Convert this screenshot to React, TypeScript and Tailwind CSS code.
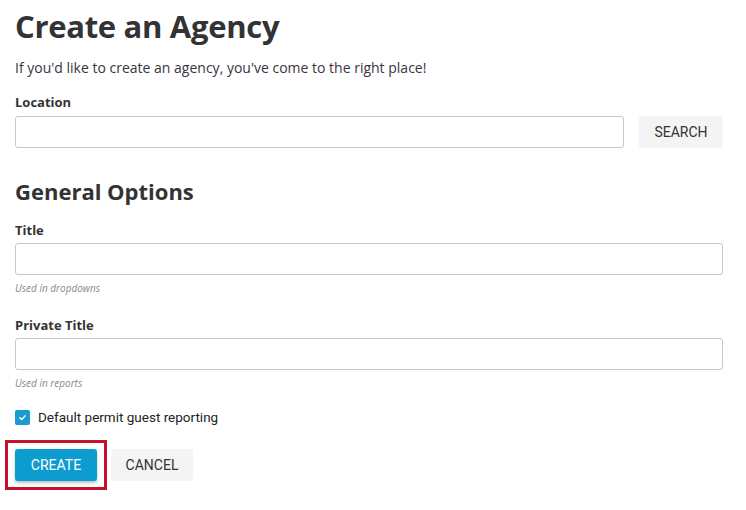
import React from "react";

function Field({ label, hint }: { label: string; hint?: string }) {
  return (
    <div className="flex flex-col">
      <label className="text-[13px] font-bold text-[#333] leading-[18px] mb-[4px]">{label}</label>
      <input className="h-[32px] w-full rounded-[3px] border border-[#c6c4cc] bg-white px-2 outline-none" />
      {hint && (
        <span className="mt-[6px] text-[10px] italic text-[#8a8a8a] leading-[14px]">{hint}</span>
      )}
    </div>
  );
}

export default function App() {
  return (
    <div
      className="w-[746px] h-[510px] bg-white pl-[15px] pr-[23px] pt-[4px] text-[#333]"
      style={{ fontFamily: '"Open Sans", "Noto Sans", sans-serif' }}
    >
      <h1 className="text-[31px] font-bold leading-[44px] text-[#333] tracking-[-0.3px]">Create an Agency</h1>
      <p className="mt-[11px] text-[14px] leading-[18px] text-[#3a3342]">
        If you'd like to create an agency, you've come to the right place!
      </p>
      <div className="mt-[16px]">
        <label className="block text-[13px] font-bold leading-[18px] mb-[5px]">Location</label>
        <div className="flex items-center gap-[15px]">
          <input className="h-[32px] flex-1 rounded-[3px] border border-[#c6c4cc] bg-white px-2 outline-none" />
          <button
            className="h-[32px] w-[84px] rounded-[3px] bg-[#f4f4f4] text-[14px] text-[#333]"
            style={{ fontFamily: 'Roboto, "Liberation Sans", sans-serif' }}
          >
            SEARCH
          </button>
        </div>
      </div>
      <h2 className="mt-[28px] text-[22px] font-bold leading-[30px] text-[#333]">General Options</h2>
      <div className="mt-[15px]">
        <Field label="Title" hint="Used in dropdowns" />
      </div>
      <div className="mt-[21px]">
        <Field label="Private Title" hint="Used in reports" />
      </div>
      <div
        className="mt-[18px] flex items-center gap-[8px]"
        style={{ fontFamily: 'Roboto, "Liberation Sans", sans-serif' }}
      >
        <span className="flex h-[15px] w-[15px] items-center justify-center rounded-[2px] bg-[#1a9bd0]">
          <svg width="9" height="9" viewBox="0 0 10 10" fill="none">
            <path d="M2 5.2 L4.1 7.2 L8 3" stroke="white" strokeWidth="1.4" strokeLinecap="round" strokeLinejoin="round" />
          </svg>
        </span>
        <span className="text-[13.5px] text-[#222] leading-[18px]">Default permit guest reporting</span>
      </div>
      <div
        className="mt-[14px] flex items-center gap-[4px] -ml-[10px]"
        style={{ fontFamily: 'Roboto, "Liberation Sans", sans-serif' }}
      >
        <div className="border-[3px] border-[#c8102e] px-[7px] py-[6px]">
          <button className="h-[32px] w-[82px] rounded-[3px] bg-[#0d9ccf] text-[14px] text-white shadow-[0_2px_3px_rgba(0,0,0,0.25)] block">
            CREATE
          </button>
        </div>
        <button className="h-[32px] w-[82px] rounded-[3px] bg-[#f4f4f4] text-[14px] text-[#333]">CANCEL</button>
      </div>
    </div>
  );
}
